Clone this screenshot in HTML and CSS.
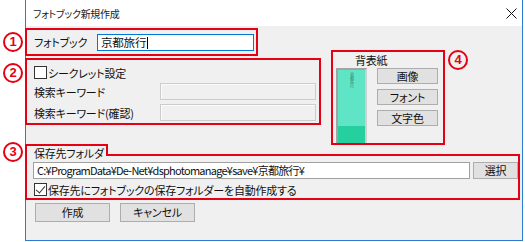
FILE: index.html
```html
<!DOCTYPE html>
<html lang="ja">
<head>
    <meta charset="UTF-8">
    <meta name="viewport" content="width=device-width, initial-scale=1.0">
    <title>フォトブック新規作成</title>
    <link rel="stylesheet" href="styles.css">
</head>
<body>
    <div class="window">
        <div class="titlebar">
            <span class="title">フォトブック新規作成</span>
            <svg class="close" width="11" height="11" viewBox="0 0 11 11">
                <path d="M0.5 0.5 L10.5 10.5 M10.5 0.5 L0.5 10.5" stroke="#111" stroke-width="1" fill="none"/>
            </svg>
        </div>
        <div class="client">
            <div class="top-row">
                <div class="left-col">
                    <div class="mark-box box-name">
                        <span class="num num-1">1</span>
                        <span class="name-label">フォトブック</span>
                        <div class="textbox focused">京都旅行<span class="caret"></span></div>
                    </div>
                    <div class="mark-box box-secret">
                        <span class="num num-2">2</span>
                        <div class="check-row"><span class="check"></span>シークレット設定</div>
                        <div class="field-row">
                            <span>検索キーワード</span>
                            <div class="textbox disabled"></div>
                        </div>
                        <div class="field-row">
                            <span>検索キーワード(確認)</span>
                            <div class="textbox disabled"></div>
                        </div>
                    </div>
                </div>
                <div class="mark-box box-spine">
                    <span class="num num-4">4</span>
                    <div class="spine-label">背表紙</div>
                    <div class="spine-row">
                        <div class="spine-preview">
                            <div class="spine-top"><span class="spine-text">京都旅行</span></div>
                            <div class="spine-bottom"></div>
                        </div>
                        <div class="spine-buttons">
                            <div class="btn">画像</div>
                            <div class="btn">フォント</div>
                            <div class="btn">文字色</div>
                        </div>
                    </div>
                </div>
            </div>

            <div class="folder">
                <span class="num num-3">3</span>
                <div class="folder-head">
                    <span class="folder-tab">保存先フォルダ</span>
                    <span class="folder-fill"></span>
                </div>
                <div class="folder-body">
                    <div class="path-row">
                        <div class="textbox path">C:¥ProgramData¥De-Net¥dsphotomanage¥save¥京都旅行¥</div>
                        <div class="btn btn-select">選択</div>
                    </div>
                    <div class="check-row"><span class="check checked"></span>保存先にフォトブックの保存フォルダーを自動作成する</div>
                </div>
            </div>

            <div class="actions">
                <div class="btn btn-action">作成</div>
                <div class="btn btn-action">キャンセル</div>
            </div>
        </div>
    </div>
</body>
</html>
```

FILE: styles.css
```css
body, html {
    margin: 0;
    padding: 0;
    background: #ffffff;
    font-family: "Noto Sans CJK JP", "Noto Sans", sans-serif;
    font-size: 11px;
    letter-spacing: -0.2px;
    font-feature-settings: "palt";
    color: #111;
    overflow: hidden;
}
.window {
    margin-left: 25px;
    width: 498px;
    height: 241px;
    box-sizing: border-box;
    border: 1px solid #2b7cd3;
    border-top: none;
    display: flex;
    flex-direction: column;
}
.titlebar {
    height: 26px;
    background: #fff;
    display: flex;
    align-items: center;
    padding-left: 7px;
    padding-right: 5px;
}
.title {
    flex: 1;
    font-size: 10px;
    letter-spacing: -0.3px;
    color: #222;
}
.close {
    display: block;
}
.client {
    flex: 1;
    background: #f0f0f0;
    display: flex;
    flex-direction: column;
}

/* red annotation boxes */
.mark-box {
    position: relative;
    border: 2px solid #e60013;
    box-sizing: border-box;
}
.num {
    position: absolute;
    width: 20px;
    height: 20px;
    box-sizing: border-box;
    border: 2px solid #e60013;
    border-radius: 50%;
    color: #e60013;
    font-family: "Liberation Sans", Arial, sans-serif;
    font-weight: bold;
    font-size: 13px;
    letter-spacing: 0;
    line-height: 16px;
    text-align: center;
}
.num-1 { left: -24px; top: 2px; }
.num-2 { left: -24px; top: 3px; }
.num-4 { left: 115px; top: -2px; }
.num-3 { left: -22px; top: -2px; }

.top-row {
    display: flex;
    align-items: flex-start;
    height: 119px;
}
.left-col {
    margin-left: -1px;
    display: flex;
    flex-direction: column;
}
.box-name {
    margin-top: 2px;
    width: 233px;
    height: 28px;
    display: flex;
    align-items: center;
    padding: 0 2px 0 7px;
}
.name-label {
    width: 63px;
}
.textbox {
    box-sizing: border-box;
    height: 17px;
    background: #fff;
    border: 1px solid #7a7a7a;
    line-height: 15px;
    padding-left: 3px;
    white-space: nowrap;
    overflow: hidden;
}
.textbox.focused {
    width: 157px;
    border-color: #0078d7;
    font-size: 11.5px;
}
.caret {
    display: inline-block;
    width: 1px;
    height: 12px;
    background: #000;
    vertical-align: -2px;
    margin-left: 1px;
}
.textbox.disabled {
    background: #f0f0f0;
    border-color: #cccccc;
    box-shadow: inset 0 1px 0 #fbfbfb, inset 1px 0 0 #fbfbfb;
}

.box-secret {
    margin-top: 2px;
    width: 296px;
    height: 67px;
    padding: 5px 3px 0 7px;
}
.check-row {
    display: flex;
    align-items: center;
    height: 15px;
}
.check {
    width: 13px;
    height: 13px;
    box-sizing: border-box;
    border: 1px solid #333;
    background: #fff;
    margin-right: 1px;
    position: relative;
}
.check.checked::after {
    content: "";
    position: absolute;
    left: 3px;
    top: 0px;
    width: 4px;
    height: 8px;
    border: solid #333;
    border-width: 0 1px 1px 0;
    transform: rotate(40deg);
}
.box-secret .check-row {
    margin-bottom: 3px;
}
.field-row {
    display: grid;
    grid-template-columns: 1fr 156px;
    align-items: center;
    margin-bottom: 4px;
}

/* spine */
.box-spine {
    margin-left: 10px;
    margin-top: 24px;
    width: 114px;
    height: 95px;
    padding: 0 5px 0 3px;
}
.spine-label {
    height: 16px;
    line-height: 16px;
    padding-left: 19px;
}
.spine-row {
    display: flex;
}
.spine-preview {
    width: 31px;
    height: 75px;
    box-sizing: border-box;
    border: 2px solid #a3a3a3;
    border-right-color: #cfcfcf;
    border-bottom: none;
    display: flex;
    flex-direction: column;
}
.spine-top {
    height: 56px;
    background: #5fe5c5;
    display: flex;
    justify-content: center;
}
.spine-text {
    writing-mode: vertical-rl;
    font-size: 4px;
    line-height: 5px;
    letter-spacing: 0;
    color: #2a7d6a;
    margin-top: 2px;
}
.spine-bottom {
    flex: 1;
    background: #25cf9e;
}
.spine-buttons {
    margin-left: 10px;
    display: flex;
    flex-direction: column;
    gap: 5px;
}
.btn {
    box-sizing: border-box;
    background: #e1e1e1;
    border: 1px solid #adadad;
    text-align: center;
    line-height: 14px;
    height: 16px;
}
.spine-buttons .btn {
    width: 61px;
}

/* folder */
.folder {
    position: relative;
    margin-top: -1px;
    margin-left: -1px;
    width: 495px;
}
.folder-head {
    display: flex;
    height: 12px;
}
.folder-tab {
    width: 83px;
    box-sizing: border-box;
    border: 2px solid #e60013;
    border-bottom: none;
    padding-left: 7px;
    line-height: 15px;
    white-space: nowrap;
}
.folder-fill {
    flex: 1;
    border-bottom: 2px solid #e60013;
}
.folder-body {
    border: 2px solid #e60013;
    border-top: none;
    padding: 6px 0 1px 6px;
}
.path-row {
    display: flex;
    gap: 3px;
    margin-bottom: 3px;
}
.textbox.path {
    position: relative;
    width: 437px;
    border-color: #a0a0a0;
    padding-left: 3px;
    letter-spacing: -0.75px;
}
/* darker stretch on the path box edge, as in the capture */
.textbox.path::after {
    content: "";
    position: absolute;
    left: 365px;
    top: -1px;
    width: 26px;
    height: 15px;
    border-top: 1px solid #3a3a3a;
    border-bottom: 1px solid #555;
}
.btn-select {
    width: 45px;
    height: 17px;
    line-height: 15px;
}
.folder-body .check-row {
    padding-left: 1px;
    height: 15px;
}

.actions {
    display: flex;
    gap: 10px;
    margin: 3px 0 0 9px;
}
.btn-action {
    width: 75px;
    height: 19px;
    line-height: 17px;
}
```
